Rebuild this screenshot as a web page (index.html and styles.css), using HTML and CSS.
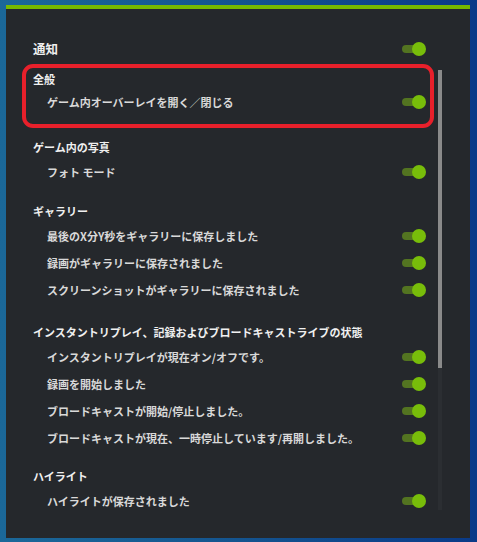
FILE: index.html
```html
<!DOCTYPE html>
<html lang="ja">
<head>
<meta charset="utf-8">
<link rel="stylesheet" href="styles.css">
</head>
<body>
<div class="panel">
  <div class="row top">
    <span class="title">通知</span>
    <span class="toggle"></span>
  </div>

  <div class="section general">
    <div class="header small">全般</div>
    <div class="row item"><span>ゲーム内オーバーレイを開く／閉じる</span><span class="toggle"></span></div>
  </div>

  <div class="section photo">
    <div class="header">ゲーム内の写真</div>
    <div class="row item"><span>フォト モード</span><span class="toggle"></span></div>
  </div>

  <div class="section gallery">
    <div class="header">ギャラリー</div>
    <div class="row item"><span>最後のX分Y秒をギャラリーに保存しました</span><span class="toggle"></span></div>
    <div class="row item"><span>録画がギャラリーに保存されました</span><span class="toggle"></span></div>
    <div class="row item"><span>スクリーンショットがギャラリーに保存されました</span><span class="toggle"></span></div>
  </div>

  <div class="section status">
    <div class="header">インスタントリプレイ、記録およびブロードキャストライブの状態</div>
    <div class="row item"><span>インスタントリプレイが現在オン/オフです。</span><span class="toggle"></span></div>
    <div class="row item"><span>録画を開始しました</span><span class="toggle"></span></div>
    <div class="row item"><span>ブロードキャストが開始/停止しました。</span><span class="toggle"></span></div>
    <div class="row item"><span>ブロードキャストが現在、一時停止しています/再開しました。</span><span class="toggle"></span></div>
  </div>

  <div class="section highlights">
    <div class="header">ハイライト</div>
    <div class="row item"><span>ハイライトが保存されました</span><span class="toggle"></span></div>
  </div>

  <div class="scroll-track"></div>
  <div class="scroll-thumb"></div>
  <div class="highlight"></div>
</div>
</body>
</html>
```

FILE: styles.css
```css
html, body {
  margin: 0;
  padding: 0;
}
body {
  width: 477px;
  height: 542px;
  background: linear-gradient(to right, #1b6899 0%, #14548f 50%, #0a3a88 100%);
  overflow: hidden;
  font-family: "Noto Sans CJK JP", "Noto Sans", sans-serif;
  font-weight: 700;
}
.panel {
  position: relative;
  box-sizing: border-box;
  margin: 5px 0 0 6px;
  width: 464px;
  height: 533px;
  background: #25282c;
  border-top: 4px solid #76b900;
  padding: 26px 44px 0 27px;
}
.row {
  display: flex;
  align-items: center;
  justify-content: space-between;
  height: 27px;
}
.title {
  font-size: 12.5px;
  color: #f0f0f0;
}
.header {
  display: flex;
  align-items: center;
  height: 23px;
  font-size: 11px;
  color: #f0f0f0;
  white-space: nowrap;
}
.header.small {
  height: 19px;
}
.section {
  margin-top: 15px;
}
.section.general {
  margin-top: 7px;
}
.section.photo {
  margin-top: 20px;
}
.section.gallery {
  margin-top: 14px;
}
.section.status {
  margin-top: 17px;
}
.section.highlights {
  margin-top: 13px;
}
.item {
  padding-left: 14px;
  font-size: 11px;
  color: #d9d9d9;
  white-space: nowrap;
}
.toggle {
  position: relative;
  width: 24px;
  height: 14px;
  flex: none;
}
.toggle::before {
  content: "";
  position: absolute;
  left: 0;
  top: 3px;
  width: 20px;
  height: 8px;
  border-radius: 4px;
  background: #537421;
}
.toggle::after {
  content: "";
  position: absolute;
  right: 0;
  top: 0;
  width: 14px;
  height: 14px;
  border-radius: 50%;
  background: #78bd0a;
}
.scroll-track {
  position: absolute;
  left: 432px;
  top: 61px;
  width: 4px;
  height: 440px;
  background: #2b2e32;
}
.scroll-thumb {
  position: absolute;
  left: 432px;
  top: 61px;
  width: 4px;
  height: 298px;
  background: #8a8a8a;
}
.highlight {
  position: absolute;
  left: 16px;
  top: 55px;
  width: 412px;
  height: 64px;
  box-sizing: border-box;
  border: 4px solid #e8202b;
  border-radius: 11px;
}
```
